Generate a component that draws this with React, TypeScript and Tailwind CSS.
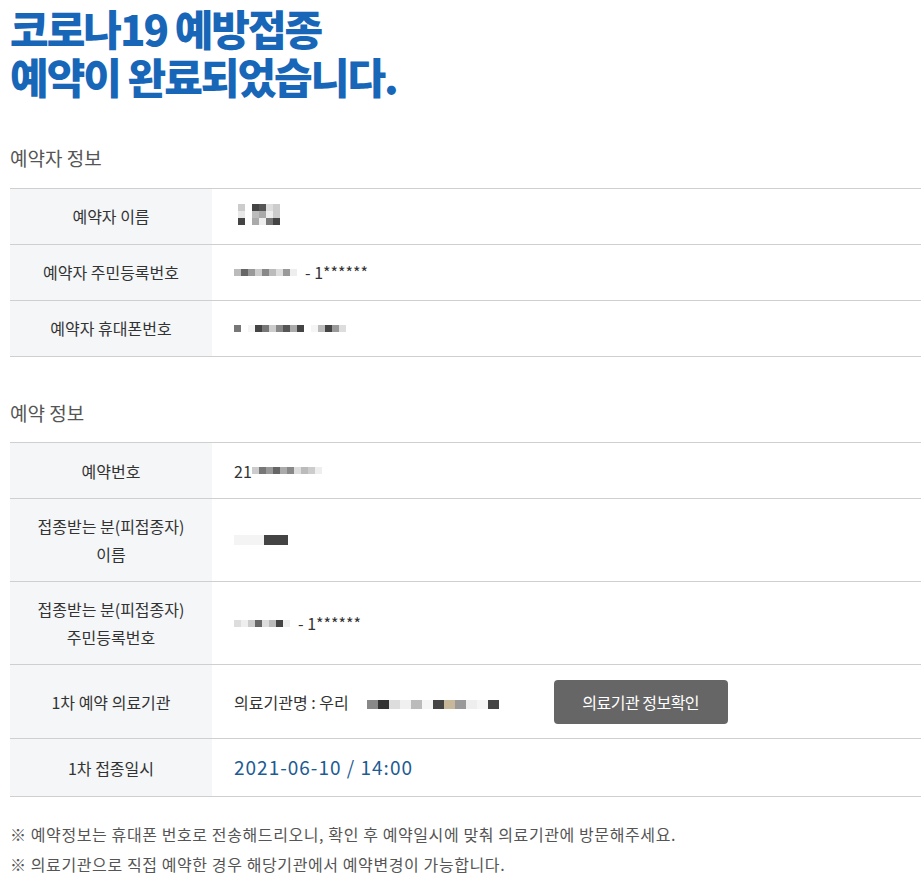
import React from 'react'

const font = { fontFamily: '"Noto Sans CJK KR", "Noto Sans", sans-serif' }

// blurred / pixelated personal data
function Masked({ cells, size = 'w-[7px] h-[7px]' }: { cells: string[]; size?: string }) {
  return (
    <span className="inline-flex items-center">
      {cells.map((c, i) => (
        <span key={i} className={`inline-block ${size} ${c}`} />
      ))}
    </span>
  )
}

function Row({ label, children, h }: { label: React.ReactNode; children: React.ReactNode; h: string }) {
  return (
    <div className={`flex border-b border-[#cfcfcf] ${h}`}>
      <div className="w-[202px] shrink-0 bg-[#f4f6f8] flex items-center justify-center text-center text-[16px] leading-[28px] text-[#333]">
        {label}
      </div>
      <div className="flex-1 flex items-center pl-[22px] text-[16px] text-[#333]">{children}</div>
    </div>
  )
}

export default function App() {
  return (
    <div className="min-h-screen bg-white pl-[10px] pt-[4px]" style={font}>
      <h1 className="text-[42px] leading-[48px] font-black tracking-[-2px] text-[#1766b8]">
        <span className="block">코로나19 예방접종</span>
        <span className="block">예약이 완료되었습니다.</span>
      </h1>

      <h2 className="mt-[44px] text-[19px] text-[#555]">예약자 정보</h2>
      <div className="mt-[15px] border-t border-[#cfcfcf]">
        <Row label="예약자 이름" h="h-[56px]">
          <span className="flex flex-col -mt-[4px] ml-[4px]">
            <Masked cells={['bg-[#ccc]', 'bg-white', 'bg-[#444]', 'bg-[#555]', 'bg-[#ddd]', 'bg-[#ccc]']} />
            <Masked cells={['bg-[#e8e8e8]', 'bg-white', 'bg-[#bbb]', 'bg-[#aaa]', 'bg-[#eee]', 'bg-[#ccc]']} />
            <Masked cells={['bg-[#444]', 'bg-white', 'bg-[#aaa]', 'bg-[#eee]', 'bg-[#777]', 'bg-[#444]']} />
          </span>
        </Row>
        <Row label="예약자 주민등록번호" h="h-[56px]">
          <Masked cells={['bg-[#bbb]', 'bg-[#666]', 'bg-[#999]', 'bg-[#ccc]', 'bg-[#888]', 'bg-[#bbb]', 'bg-[#ddd]', 'bg-[#999]', 'bg-[#eee]']} />
          <span className="ml-[8px]">- 1******</span>
        </Row>
        <Row label="예약자 휴대폰번호" h="h-[56px]">
          <Masked cells={['bg-[#777]', 'bg-white', 'bg-[#f5f5f5]', 'bg-[#444]', 'bg-[#777]', 'bg-[#ccc]', 'bg-[#888]', 'bg-[#555]', 'bg-[#aaa]', 'bg-[#444]', 'bg-white', 'bg-[#f5f5f5]', 'bg-[#bbb]', 'bg-[#444]', 'bg-[#999]', 'bg-[#ddd]']} />
        </Row>
      </div>

      <h2 className="mt-[42px] text-[19px] text-[#555]">예약 정보</h2>
      <div className="mt-[15px] border-t border-[#cfcfcf]">
        <Row label="예약번호" h="h-[56px]">
          <span>21</span>
          <Masked cells={['bg-[#ccc]', 'bg-[#777]', 'bg-[#999]', 'bg-[#666]', 'bg-[#aaa]', 'bg-[#888]', 'bg-[#ddd]', 'bg-[#bbb]', 'bg-[#ccc]', 'bg-[#eee]']} />
        </Row>
        <Row label={<>접종받는 분(피접종자)<br />이름</>} h="h-[83px]">
          <span className="inline-block w-[30px] h-[10px] bg-[#f4f4f4]" />
          <span className="inline-block w-[24px] h-[10px] bg-[#444]" />
        </Row>
        <Row label={<>접종받는 분(피접종자)<br />주민등록번호</>} h="h-[83px]">
          <Masked cells={['bg-[#ddd]', 'bg-[#eee]', 'bg-[#ccc]', 'bg-[#666]', 'bg-[#ddd]', 'bg-[#bbb]', 'bg-[#444]', 'bg-[#eee]']} />
          <span className="ml-[8px]">- 1******</span>
        </Row>
        <Row label="1차 예약 의료기관" h="h-[74px]">
          <span className="shrink-0">의료기관명 : 우리</span>
          <span className="ml-[18px]">
            <Masked
              size="w-[11px] h-[9px]"
              cells={['bg-[#888]', 'bg-[#333]', 'bg-[#ddd]', 'bg-[#f0f0f0]', 'bg-[#bbb]', 'bg-[#f5f5f5]', 'bg-[#444]', 'bg-[#c8b89a]', 'bg-[#999]', 'bg-[#eee]', 'bg-[#f5f5f5]', 'bg-[#444]']}
            />
          </span>
          <button className="ml-[55px] w-[174px] h-[44px] rounded-[4px] bg-[#666] text-white text-[16px] tracking-[-0.5px]">
            의료기관 정보확인
          </button>
        </Row>
        <Row label="1차 접종일시" h="h-[58px]">
          <span className="text-[19px] text-[#1d5c93] tracking-[1px]">2021-06-10 / 14:00</span>
        </Row>
      </div>

      <div className="mt-[22px] text-[16px] leading-[30px] text-[#555] tracking-[0.6px]">
        <p>※ 예약정보는 휴대폰 번호로 전송해드리오니, 확인 후 예약일시에 맞춰 의료기관에 방문해주세요.</p>
        <p>※ 의료기관으로 직접 예약한 경우 해당기관에서 예약변경이 가능합니다.</p>
      </div>
    </div>
  )
}
